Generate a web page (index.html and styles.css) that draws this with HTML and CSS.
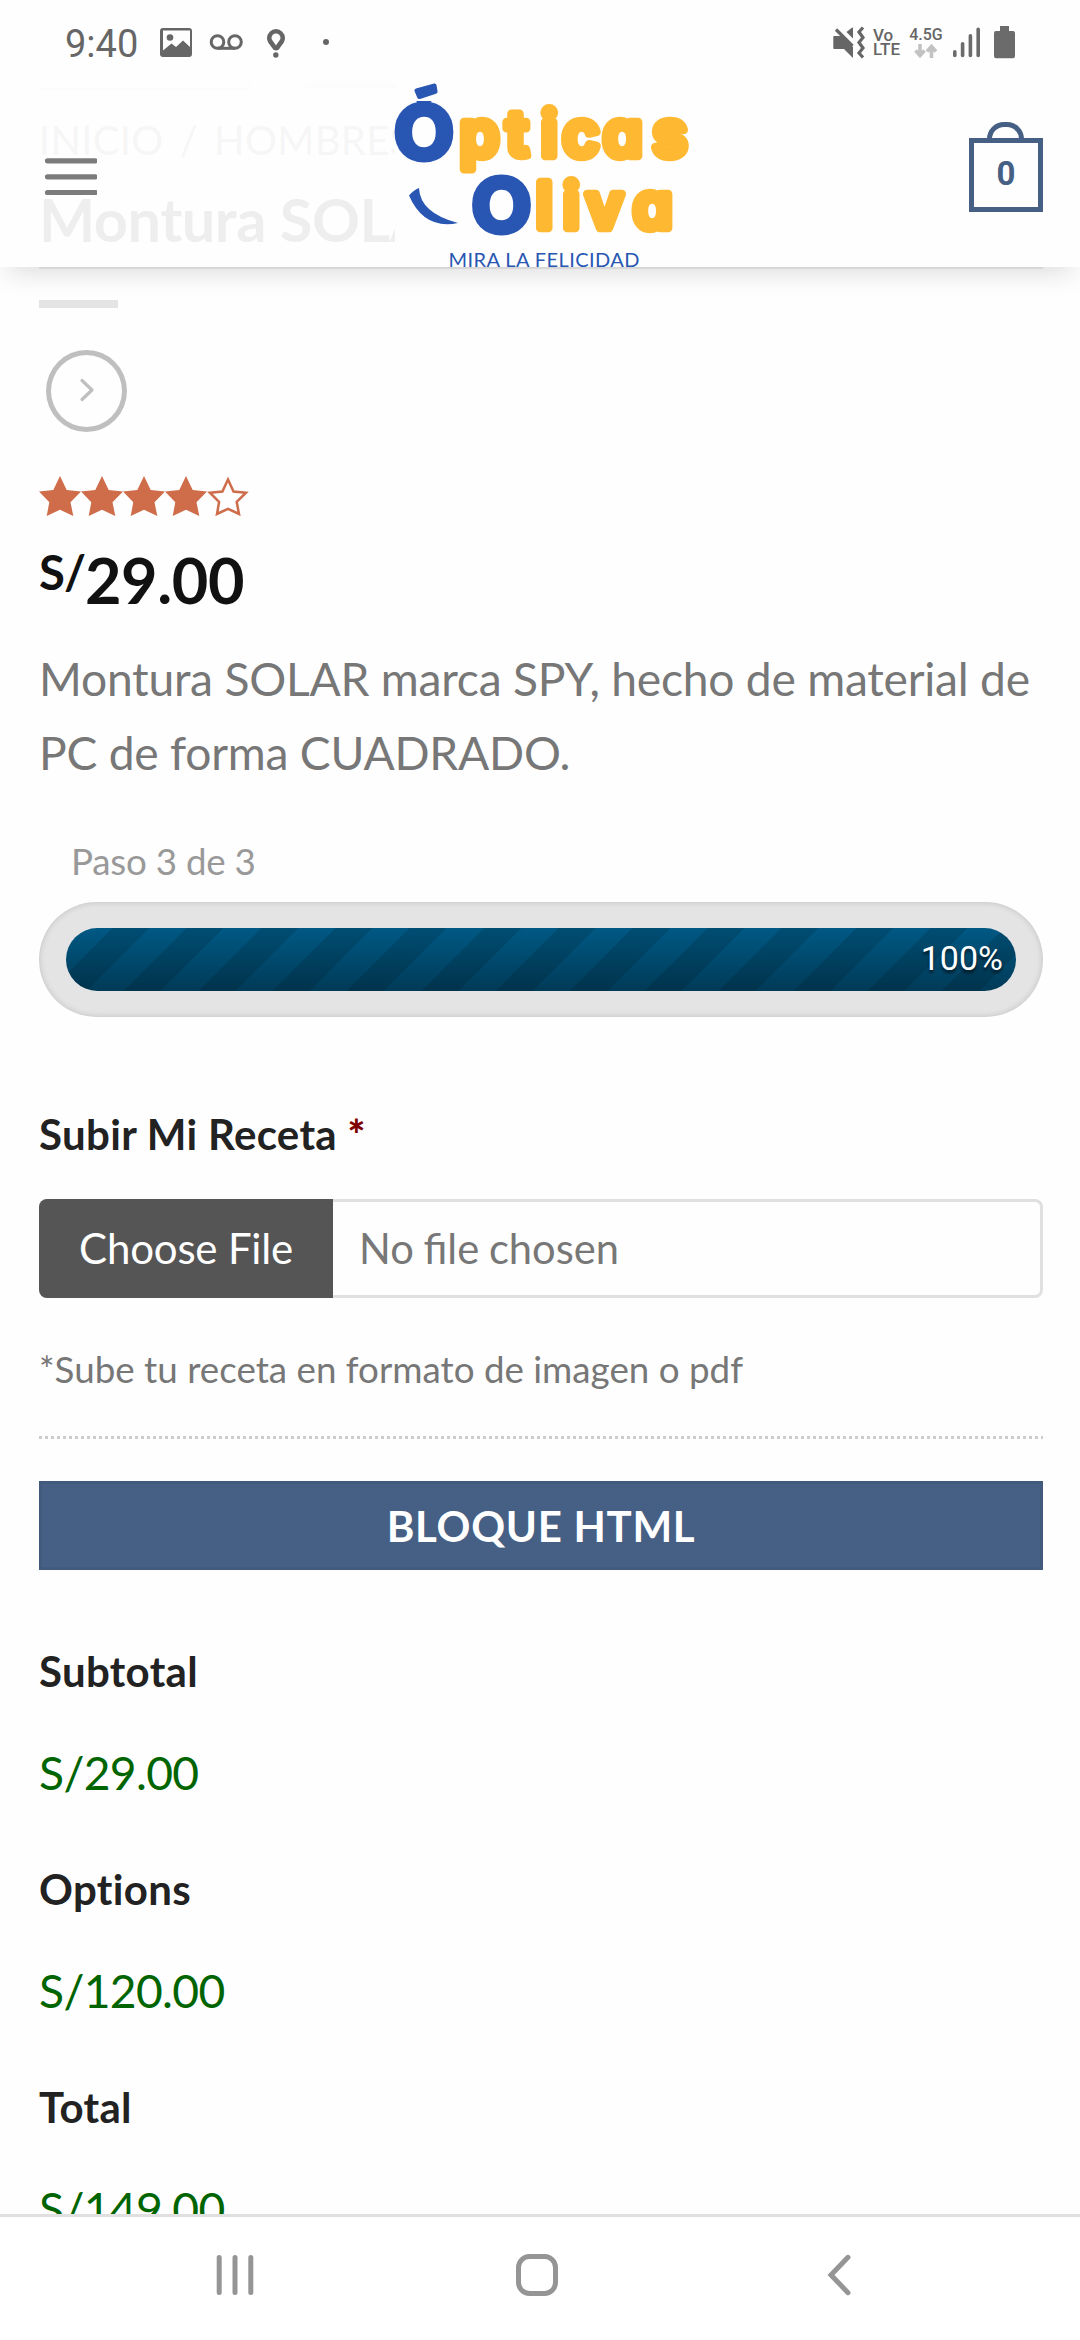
FILE: index.html
```html
<!DOCTYPE html>
<html lang="es">
<head>
<meta charset="utf-8">
<title>Ópticas Oliva</title>
<link rel="stylesheet" href="styles.css">
</head>
<body>
<div class="phone">
  <div class="status">
    <span class="clock">9:40</span>
    <svg class="status-left" width="174" height="40" viewBox="156 20 174 40" fill="#666">
      <path fill-rule="evenodd" d="M163 28h26q3 0 3 3v23q0 3-3 3h-26q-3 0-3-3V31q0-3 3-3zM163 30.500v20l8.500-7 4.500 3.500 7-6.500 7 6.500V30.500z"/>
      <circle cx="170" cy="37.500" r="3.300"/>
      <g fill="none" stroke="#666" stroke-width="3"><circle cx="217.500" cy="42" r="6.300"/><circle cx="235" cy="42" r="6.300"/><path d="M217.500 48.300H235"/></g>
      <path fill-rule="evenodd" d="M276 29a9.200 9.200 0 0 1 9 9c0 4-3 7-5.300 10.200-1.500 3-5.800 3-7.300 0C270 45 267 42 267 38a9.200 9.200 0 0 1 9-9zM276 33.500a4.500 4.500 0 0 0-4.500 4.500c0 2 2.500 4 4.500 7.500 2-3.500 4.500-5.500 4.500-7.500a4.500 4.500 0 0 0-4.500-4.500z"/>
      <circle cx="275.800" cy="55" r="2.700"/>
      <circle cx="326" cy="42" r="3"/>
    </svg>
    <svg class="status-mute" width="32" height="34" viewBox="833 26 32 34" fill="#666">
      <path d="M834 36h7l12 11v11l-9-9h-10q-.700 0-.700-1V37q0-1 .700-1zM846.500 32l5-4q1.500-1 1.500.500v10z"/>
      <path d="M836 29.500L852.500 46" stroke="#666" stroke-width="3.200"/>
      <path d="M863 27.500l-4 4.500 4 5.500-4 5 4 5.500-4 5 4 4.500" fill="none" stroke="#666" stroke-width="3.200"/>
    </svg>
    <span class="volte"><span>Vo</span><span>LTE</span></span>
    <span class="network"><span>4.5G</span>
      <svg width="24" height="14" viewBox="0 0 24 14" fill="none" stroke="#c2c2c2" stroke-width="3.600"><path d="M6 0v11M1.500 6.500L6 11.500l4.500-5M17.500 14V3M13 7.500L17.500 2.500 22 7.500"/></svg>
    </span>
    <svg class="signal" width="64" height="34" viewBox="952 26 64 34" fill="#6b6b6b">
      <rect x="953" y="50" width="3.600" height="7.300" rx="1.800"/><rect x="960.800" y="42" width="3.600" height="15.300" rx="1.800"/><rect x="968.600" y="34" width="3.600" height="23.300" rx="1.800"/><rect x="976.400" y="27.500" width="3.600" height="29.800" rx="1.800"/>
      <path d="M1000 26h9v5h4q2 0 2 2v23q0 2.300-2 2.300h-17q-2 0-2-2.300V33q0-2 2-2h4z"/>
    </svg>
  </div>

  <main class="screen">
    <header class="header">
      <svg class="menu" width="54" height="38" viewBox="0 0 54 38" stroke="#7c7c7c" stroke-width="5.200" stroke-linecap="round"><path d="M4.500 2.800h47.800M4.500 18.800h47.800M4.500 34.500h47.800"/></svg>
      <svg class="logo" width="295" height="184" viewBox="395 83 295 184">
        <defs><clipPath id="o-body"><rect x="390" y="101" width="70" height="70"/></clipPath></defs>
        <rect x="395" y="83" width="295" height="184" fill="#fefefe"/>
        <g class="word" stroke-linejoin="round">
          <text class="big-o" clip-path="url(#o-body)" x="394.600" y="157.500" textLength="59" lengthAdjust="spacingAndGlyphs">Ó</text>
          <text class="letters" x="459.700 506 541 562.500 603 652.500" y="155.500">pticas</text>
          <text class="big-o" x="471.900" y="231.300" textLength="59" lengthAdjust="spacingAndGlyphs">O</text>
          <text class="letters" x="536 563 586 633" y="228">liva</text>
        </g>
        <path d="M416 88.500L434 83.500Q436 83 436.500 85L437.500 91Q438 93 436 93.700L420 99Q418 99.500 417.200 97.500L414.500 91Q414 89 416 88.500z" fill="#2856b2"/>
        <path d="M409 195.500Q413.500 190 419 188Q420 213 458 223Q424 230 409 195.500z" fill="#2856b2"/>
        <text class="tagline" x="448.500" y="266.500" textLength="191">MIRA LA FELICIDAD</text>
      </svg>
      <div class="cart"><span class="handle"></span><span class="count">0</span></div>
    </header>

    <section class="product">
      <div class="thumbs"><i class="thumb active"></i><i class="thumb small"></i></div>
      <div class="crumbs"><span>INICIO</span><span>/</span><span>HOMBRES</span></div>
      <h1 class="title">Montura SOLAR SPY</h1>
      <div class="rule"></div>
      <div class="bar"></div>
      <div class="next"><svg width="16" height="26" viewBox="0 0 16 26" fill="none" stroke="#bfbfbf" stroke-width="3.200" stroke-linecap="round" stroke-linejoin="round"><path d="M3 3.500l10 9.500-10 9.500"/></svg></div>
      <svg class="stars" width="211" height="40" viewBox="0 0 211 40">
        <defs><path id="star" d="M21 0l6.700 14L42 15.600 31.500 26.200 34.300 40 21 33.800 7.700 40l2.600-13.800L0 15.600 14.300 14z"/></defs>
        <g fill="#cf6c4a"><use href="#star"/><use href="#star" x="42"/><use href="#star" x="84"/><use href="#star" x="126"/></g>
        <path d="M189 3.500l5.500 12 12.500 1.200-9.300 9.200 2.300 12.100-11-5.200-11 5.200 2.100-12.100-9.200-9.200 12.500-1.200z" fill="none" stroke="#cf6c4a" stroke-width="2.500"/>
      </svg>
      <div class="price"><span class="currency">S/</span>29.00</div>
      <p class="desc">Montura SOLAR marca SPY, hecho de material de PC de forma CUADRADO.</p>
      <div class="step">Paso 3 de 3</div>
      <div class="progress"><div class="fill">100%</div></div>
      <div class="label upload-label">Subir Mi Receta <b class="req">*</b></div>
      <div class="file"><span class="choose">Choose File</span><span class="chosen">No file chosen</span></div>
      <div class="note">*Sube tu receta en formato de imagen o pdf</div>
      <div class="dotted"></div>
      <div class="button">BLOQUE HTML</div>
      <div class="totals">
        <div class="label">Subtotal</div><div class="amount">S/29.00</div>
        <div class="label">Options</div><div class="amount">S/120.00</div>
        <div class="label">Total</div><div class="amount">S/149.00</div>
      </div>
    </section>
  </main>

  <nav class="nav">
    <svg width="38" height="42" viewBox="0 0 38 42" stroke="#959595" stroke-width="5" stroke-linecap="round"><path d="M3.200 3.500v35M19 3.500v35M34.800 3.500v35"/></svg>
    <svg class="home" width="42" height="42" viewBox="0 0 42 42" fill="none" stroke="#959595" stroke-width="5"><rect x="2.500" y="2.500" width="37" height="37" rx="11"/></svg>
    <svg width="24" height="42" viewBox="0 0 24 42" fill="none" stroke="#959595" stroke-width="5" stroke-linecap="round"><path d="M21 3.300L4 21l17 17.700"/></svg>
  </nav>
</div>
</body>
</html>
```
FILE: styles.css
```css
* { box-sizing: border-box; }
body { margin: 0; background: #fefefe; font-family: Lato, "Liberation Sans", sans-serif; }
.phone { width: 1080px; height: 2340px; display: flex; flex-direction: column; overflow: hidden; background: #fefefe; }

.status { height: 83px; flex: none; display: flex; align-items: flex-start; padding: 20px 0 0 65px; color: #666; font-family: Roboto, sans-serif; }
.clock { width: 91px; font-size: 38px; line-height: 48px; }
.status-left { flex: none; }
.status-mute { margin: 6px 0 0 503px; flex: none; }
.volte { width: 35px; margin: 8px 0 0 8px; display: flex; flex-direction: column; font-size: 17px; line-height: 14px; font-weight: 500; }
.network { width: 38px; margin: 5px 0 0 -1px; display: flex; flex-direction: column; align-items: center; font-size: 16px; line-height: 19px; font-weight: 500; }
.signal { margin: 6px 0 0 7px; flex: none; }

.screen { flex: 1; min-height: 0; position: relative; overflow: hidden; }
.header { position: absolute; inset: 0 0 auto 0; height: 184px; z-index: 2; background: rgba(254, 254, 254, .92); box-shadow: 0 12px 26px -8px rgba(0, 0, 0, .15); }
.menu { position: absolute; left: 43px; top: 75px; }
.logo { position: absolute; left: 395px; top: 0; overflow: visible; }
.word { font-family: Inter, sans-serif; font-weight: 600; font-feature-settings: "cv11"; }
.big-o { font-size: 71.500px; fill: #2856b2; stroke: #2856b2; stroke-width: 7px; }
.letters { font-size: 63px; fill: #ffb831; stroke: #ffb831; stroke-width: 8.500px; }
.tagline { font-family: Lato, sans-serif; font-size: 20px; fill: #2856b2; }
.cart { position: absolute; left: 969px; top: 55px; width: 74px; height: 74px; border: 5px solid #456084; color: #456084; display: flex; align-items: center; justify-content: center; }
.handle { position: absolute; left: 13px; top: -21px; width: 37px; height: 17px; border: 5px solid #456084; border-bottom: 0; border-radius: 19px 19px 0 0; }
.count { font: 700 33px/40px Roboto, sans-serif; margin-top: -2px; }

.product { display: flex; flex-direction: column; padding: 0 37px 0 39px; color: #777; }
.thumbs { display: flex; gap: 54px; height: 7px; }
.thumb { width: 212px; height: 7px; border: 2px solid #d4d4d4; border-top: 0; opacity: .7; }
.thumb.small { width: 90px; height: 5px; border: 0; background: #d4d4d4; }
.crumbs { margin-top: 18px; display: flex; gap: 16px; font-size: 40px; line-height: 64px; color: #949494; letter-spacing: .300px; }
.title { margin: 8px 0 0; font-size: 59.500px; line-height: 78px; font-weight: 700; color: #333; letter-spacing: -.500px; }
.rule { margin-top: 9px; height: 2px; background: #ececec; }
.bar { margin-top: 31px; width: 79px; height: 8px; background: #e4e4e4; }
.next { margin: 42px 0 0 7px; width: 81px; height: 82px; border: 5px solid #bfbfbf; border-radius: 50%; display: flex; align-items: center; justify-content: center; }
.next svg { margin: -3px 0 0 1px; }
.stars { margin-top: 44px; }
.price { margin-top: 26px; display: flex; font-size: 63px; line-height: 76px; font-weight: 700; color: #111; letter-spacing: -.400px; }
.currency { font-size: 47.250px; line-height: 59px; letter-spacing: -1px; }
.desc { margin: 24px 0 0; font-size: 46.200px; line-height: 73.500px; letter-spacing: -.240px; }
.step { margin: 43px 0 0 32px; font-size: 36.750px; line-height: 58px; color: #999; letter-spacing: -.250px; }
.progress { margin-top: 12px; height: 115px; padding: 26px 27px; border-radius: 58px; background: #e4e4e4; box-shadow: inset 0 0 6px rgba(0, 0, 0, .16); }
.fill { height: 63px; border-radius: 32px; padding-right: 13px; text-align: right; color: #fff; font: 34px/60px Roboto, sans-serif; text-shadow: 0 3px 3px rgba(0, 0, 0, .6); background: repeating-linear-gradient(135deg, rgba(0, 0, 0, .13) 0 6.400px, transparent 6.400px 32.700px, rgba(0, 0, 0, .13) 32.700px 52.600px), linear-gradient(#005984, #003a57); }
.label { font-size: 42px; line-height: 54px; font-weight: 700; color: #222; letter-spacing: .320px; font-variant-ligatures: none; }
.upload-label { margin-top: 90px; }
.req { color: #800000; }
.file { margin-top: 38px; height: 99px; display: flex; border: 3px solid #e0e0e0; border-left: 0; border-radius: 8px; font-size: 42px; line-height: 96px; }
.choose { width: 294px; margin: -3px 0; border-radius: 8px 0 0 8px; background: #555; color: #fff; text-align: center; line-height: 98px; letter-spacing: -.200px; font-variant-ligatures: none; }
.chosen { margin-left: 26px; font-size: 41.700px; line-height: 92px; word-spacing: -1px; }
.note { margin-top: 42px; font-size: 36.750px; line-height: 58px; }
.dotted { margin-top: 38px; height: 3px; background: repeating-linear-gradient(90deg, #ccc 0 3px, transparent 3px 6px); }
.button { margin-top: 42px; height: 89px; border: 3px solid #425a7b; background: #456084; color: #fff; font-size: 42px; line-height: 84px; font-weight: 700; text-align: center; letter-spacing: .700px; }
.totals { margin-top: 74px; display: flex; flex-direction: column; }
.amount { margin: 37px 0 53px; font-size: 46.200px; line-height: 74px; color: #006400; letter-spacing: -.650px; }

.nav { height: 126px; flex: none; border-top: 3px solid #e0e0e0; background: #fff; display: flex; align-items: flex-start; padding: 37px 0 0 216px; }
.home { margin: 0 269px 0 262px; }
```
